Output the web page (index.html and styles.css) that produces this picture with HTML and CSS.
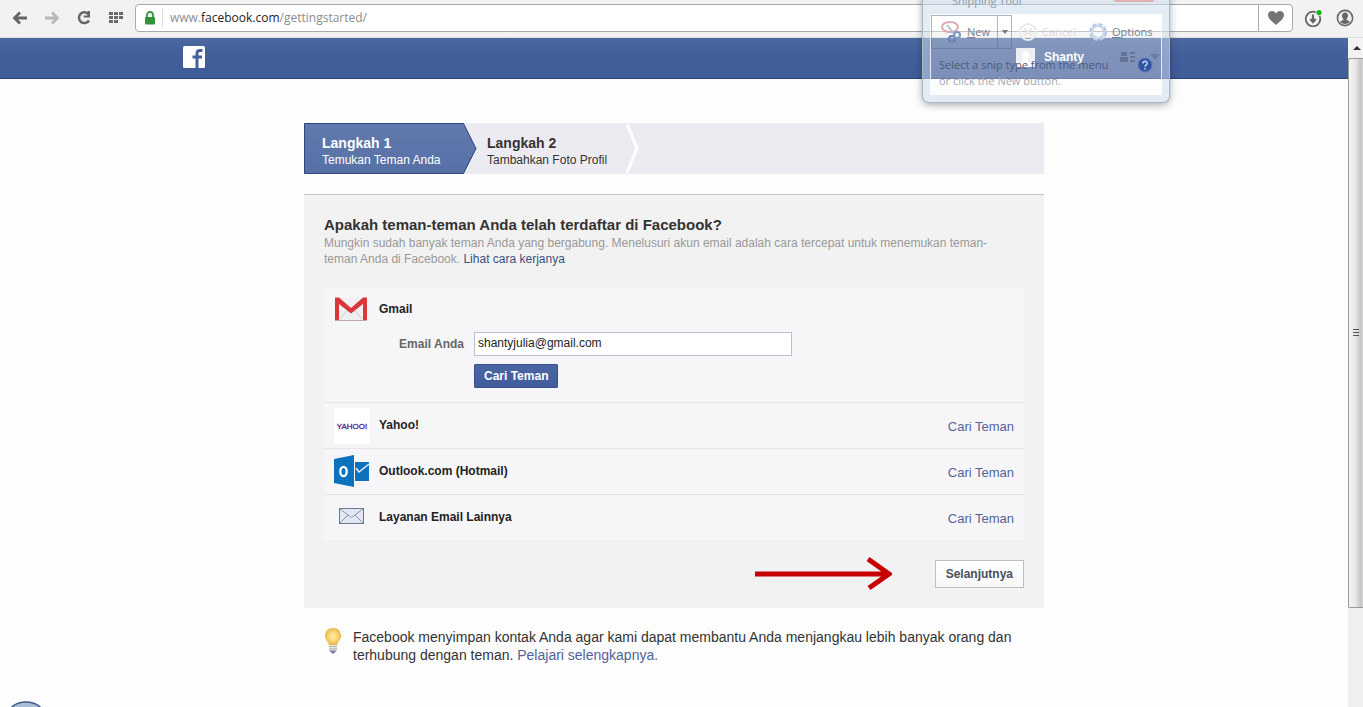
FILE: index.html
```html
<!DOCTYPE html>
<html lang="id">
<head>
<meta charset="utf-8">
<title>Facebook</title>
<link rel="stylesheet" href="styles.css">
</head>
<body>
<div class="toolbar">
  <button class="tool" aria-label="Back"><svg width="16" height="14" viewBox="0 0 16 14"><path d="M15 7H3M8 1.500L2.500 7L8 12.500" fill="none" stroke="#666" stroke-width="2.800"/></svg></button>
  <button class="tool" aria-label="Forward"><svg width="16" height="14" viewBox="0 0 16 14"><path d="M1 7H13M8 1.500L13.500 7L8 12.500" fill="none" stroke="#b8b8b8" stroke-width="2.800"/></svg></button>
  <button class="tool" aria-label="Reload"><svg width="16" height="16" viewBox="0 0 16 16"><path d="M12.500 4.200A5.400 5.400 0 1 0 13 10.500" fill="none" stroke="#666" stroke-width="2.500"/><path d="M14 1V7.500H7.800V5.500H11.500V1Z" fill="#666"/></svg></button>
  <button class="tool" aria-label="Speed dial"><svg width="16" height="12" viewBox="0 0 16 12"><path d="M1 0h4v3H1zM6 0h4v3H6zM11 0h4v3h-4zM1 4h4v3H1zM6 4h4v3H6zM11 4h4v3h-4zM1 8h4v3H1zM6 8h4v3H6z" fill="#6b6b6b"/></svg></button>
  <div class="address">
    <svg width="12" height="14" viewBox="0 0 12 14"><path d="M3 7V4a3 3 0 0 1 6 0V7" fill="none" stroke="#3a9440" stroke-width="1.800"/><rect x="1" y="6" width="10" height="7.500" rx="1" fill="#33923a"/></svg>
    <span class="url">www.<b>facebook.com</b>/gettingstarted/</span>
    <button class="heart" aria-label="Bookmark"><svg width="18" height="16" viewBox="0 0 18 16"><path d="M9 15C6 12 1 9 1 5C1 .5 7-.5 9 3.500C11-.5 17 .5 17 5C17 9 12 12 9 15Z" fill="#747474"/></svg></button>
  </div>
  <button class="tool" aria-label="Downloads"><svg width="19" height="18" viewBox="0 0 19 18"><circle cx="9" cy="10" r="7.300" fill="none" stroke="#666" stroke-width="1.800"/><path d="M9 5.500V12M6.300 10L9 13L11.700 10" fill="none" stroke="#666" stroke-width="2.200"/><circle cx="15" cy="3.500" r="3.300" fill="#f2f2f2"/><circle cx="15" cy="3.500" r="2.600" fill="#12b51c"/></svg></button>
  <button class="tool" aria-label="Account"><svg width="18" height="18" viewBox="0 0 18 18"><circle cx="9" cy="9" r="7.600" fill="none" stroke="#666" stroke-width="1.600"/><path d="M9 3.500c2 0 3 1.300 3 3.200c0 1.600-.8 2.500-1.400 3.300v1l3.400 1.400c-1 1.500-3 2.500-5 2.500s-4-1-5-2.500L7.400 11v-1C6.800 9.200 6 8.300 6 6.700c0-1.900 1-3.200 3-3.200Z" fill="#666"/></svg></button>
</div>

<div class="viewport">
  <div class="page">
    <header class="bluebar">
      <div class="bar-inner">
        <a href="#" class="logo" aria-label="Facebook"><svg width="22" height="22" viewBox="0 0 22 22"><rect width="22" height="22" rx="1.500" fill="#fff"/><path d="M14 22V7.500Q14 4.600 17 4.600H19.500M9.500 11H19" fill="none" stroke="#45619d" stroke-width="3"/></svg></a>
        <a href="#" class="user"><svg width="19" height="19" viewBox="0 0 19 19"><rect width="19" height="19" fill="#e4e7ee"/><path d="M9.500 3C12 3 13.500 4.700 13.200 7.500C13 9.800 12 11 11.800 12C12 14 16 14 16 19H3C3 14 7 14 7.200 12C7 11 6 9.800 5.800 7.500C5.500 4.700 7 3 9.500 3Z" fill="#fff"/></svg>Shanty</a>
        <a href="#" class="menu-icon" aria-label="Menu"><svg width="15" height="12" viewBox="0 0 15 12"><path d="M1 1h6v4H1zM0 6h8v5H0zM10 1h5v2h-5zM10 5h5v2h-5zM10 9h5v2h-5z" fill="#1f3263"/></svg></a>
        <a href="#" class="caret" aria-label="Account settings"><svg width="10" height="6" viewBox="0 0 10 6"><path d="M0 0H10L5 6Z" fill="#2b3f73"/></svg></a>
      </div>
    </header>

    <main class="content">
      <ol class="steps">
        <li class="step current">
          <svg class="step-shape" width="173" height="51" viewBox="0 0 173 51" aria-hidden="true"><defs><linearGradient id="stepFill" x2="0" y2="1"><stop stop-color="#627aad"/><stop offset="1" stop-color="#5670a6"/></linearGradient></defs><path d="M.5.500H159.500L172 25.500L159.500 50.500H.500Z" fill="url(#stepFill)" stroke="#2c4687"/></svg>
          <strong>Langkah 1</strong><span>Temukan Teman Anda</span>
        </li>
        <li class="step">
          <strong>Langkah 2</strong><span>Tambahkan Foto Profil</span>
        </li>
        <li class="chevron" aria-hidden="true"><svg width="14" height="49" viewBox="0 0 14 49"><path d="M1 0L11 24.500L1 49" fill="none" stroke="#fff" stroke-width="3"/></svg></li>
      </ol>

      <section class="panel">
        <h1>Apakah teman-teman Anda telah terdaftar di Facebook?</h1>
        <p class="intro">Mungkin sudah banyak teman Anda yang bergabung. Menelusuri akun email adalah cara tercepat untuk menemukan teman-teman Anda di Facebook. <a href="#">Lihat cara kerjanya</a></p>

        <div class="providers">
          <form class="provider gmail">
            <svg class="icon" width="36" height="36" viewBox="0 0 36 36"><rect x="2" y="7" width="30" height="22" fill="#f1efef"/><path d="M6 28L14 19M28 28L20 19" stroke="#d0cccc" fill="none"/><path d="M1 29.500H33" stroke="#b9a9a9"/><path d="M1 29V6.500H5L17 17L29 6.500H33V29H29V13L17 22.500L5 13V29Z" fill="#d9373c"/></svg>
            <strong class="name">Gmail</strong>
            <label for="email">Email Anda</label>
            <input id="email" type="text" value="shantyjulia@gmail.com">
            <button class="primary" type="button">Cari Teman</button>
          </form>
          <div class="provider">
            <svg class="icon" width="36" height="36" viewBox="0 0 36 36"><rect width="36" height="36" fill="#fff"/><text class="yahoo-mark" x="18" y="21" text-anchor="middle">YAHOO!</text></svg>
            <strong class="name">Yahoo!</strong><a href="#">Cari Teman</a>
          </div>
          <div class="provider">
            <svg class="icon" width="36" height="36" viewBox="0 0 36 36"><path d="M21 8H35V27H21Z" fill="#0d72bd"/><path d="M22 14L25 18L35 10" fill="none" stroke="#e8f3fb" stroke-width="1.500"/><path d="M0 5L20 1V33L0 29Z" fill="#0d72bd"/><path d="M20.500 3V31" stroke="#f6f6f8"/><ellipse cx="9.500" cy="17.500" rx="3.200" ry="4.700" fill="none" stroke="#fff" stroke-width="2.300"/></svg>
            <strong class="name">Outlook.com (Hotmail)</strong><a href="#">Cari Teman</a>
          </div>
          <div class="provider">
            <svg class="icon" width="36" height="36" viewBox="0 0 36 36"><rect x="5.500" y="8.500" width="24" height="15" fill="#e3e6f5" stroke="#6b7695"/><path d="M6 9L17.500 17.500L29 9M6 23L14 15M29 23L21 15" fill="none" stroke="#8b95b5"/></svg>
            <strong class="name">Layanan Email Lainnya</strong><a href="#">Cari Teman</a>
          </div>
        </div>

        <div class="actions">
          <svg width="138" height="36" viewBox="0 0 138 36" aria-hidden="true"><path d="M1 18H134M114 3L135 18L115 32" fill="none" stroke="#c80000" stroke-width="5"/></svg>
          <button class="next" type="button">Selanjutnya</button>
        </div>
      </section>

      <div class="tip">
        <svg width="18" height="28" viewBox="0 0 18 28"><defs><radialGradient id="glow"><stop stop-color="#fff0a8"/><stop offset=".5" stop-color="#fbd978"/><stop offset="1" stop-color="#e9b64c"/></radialGradient></defs><path d="M9 0C14 0 17 3.500 17 8C17 12 13.500 13.500 13 17H5C4.500 13.500 1 12 1 8C1 3.500 4 0 9 0Z" fill="url(#glow)"/><path d="M5 18.500H13M5 21H13" stroke="#b9b5a4" stroke-width="1.500"/><path d="M5 22.500H13L9 26Z" fill="#7478a0"/></svg>
        <p>Facebook menyimpan kontak Anda agar kami dapat membantu Anda menjangkau lebih banyak orang dan terhubung dengan teman. <a href="#">Pelajari selengkapnya.</a></p>
      </div>
    </main>
  </div>

  <div class="scrollbar" aria-hidden="true">
    <svg class="arrow-up" width="15" height="20" viewBox="0 0 15 20"><path d="M5 12L9 8L13 12Z" fill="#333"/></svg>
    <div class="thumb"><svg width="6" height="8" viewBox="0 0 6 8"><path d="M0 .5H6M0 3.500H6M0 6.500H6" stroke="#555"/></svg></div>
  </div>
</div>

<div class="snip">
  <div class="snip-title">Snipping Tool</div>
  <div class="snip-close"></div>
  <div class="snip-body">
    <div class="snip-tools">
      <button class="snip-new"><svg width="22" height="24" viewBox="0 0 22 24"><ellipse cx="9" cy="7" rx="8" ry="5" fill="none" stroke="#dba9b2" stroke-width="2"/><path d="M6 5L14 15" stroke="#b8bccb" stroke-width="2"/><circle cx="11" cy="19" r="3" fill="none" stroke="#6581b5" stroke-width="2"/><circle cx="16" cy="15" r="3" fill="none" stroke="#7f98c4" stroke-width="2"/></svg><span><u>N</u>ew</span></button>
      <button class="snip-drop" aria-label="Snip types"><svg width="6" height="4" viewBox="0 0 6 4"><path d="M0 0H6L3 4Z" fill="#777"/></svg></button>
      <button class="snip-cancel"><svg width="20" height="20" viewBox="0 0 20 20"><circle cx="10" cy="10" r="8" fill="none" stroke="#e9ebef" stroke-width="2"/><path d="M6 6L14 14M14 6L6 14" stroke="#f0e4e6" stroke-width="2"/></svg><span>Cancel</span></button>
      <button class="snip-options"><svg width="20" height="20" viewBox="0 0 20 20"><circle cx="10" cy="10" r="7" fill="none" stroke="#b9cae6" stroke-width="4" stroke-dasharray="4 1.500"/><circle cx="10" cy="10" r="6" fill="none" stroke="#cbd8ec" stroke-width="2"/></svg><span><u>O</u>ptions</span></button>
    </div>
    <p class="snip-help">Select a snip type from the menu<br><span>or click the New button.</span></p>
    <svg class="snip-question" width="16" height="16" viewBox="0 0 16 16"><circle cx="8" cy="8" r="7" fill="#3155a3" stroke="#5f7cb8"/><path d="M5.800 6.500C5.800 3.500 10.500 3.800 10.200 6.500C10 8 8 8 8 9.800M8 11V12.500" fill="none" stroke="#c9d6ee" stroke-width="1.500"/></svg>
  </div>
</div>

<svg class="orb" width="32" height="6" viewBox="0 0 32 6" aria-hidden="true"><ellipse cx="16" cy="14" rx="18" ry="13" fill="#a9bdd8" stroke="#3e5c85" stroke-width="1.500"/></svg>
</body>
</html>
```
FILE: styles.css
```css
* { box-sizing: border-box; }

body {
  margin: 0;
  min-height: 100vh;
  display: flex;
  flex-direction: column;
  position: relative;
  overflow: hidden;
  background: #fdfdfe;
  color: #333;
  font: 12px/16px "Liberation Sans", Arial, sans-serif;
}

button { font: inherit; color: inherit; margin: 0; padding: 0; border: 0; background: none; }
a { color: #52639b; text-decoration: none; }
svg { display: block; flex: none; }

/* Browser toolbar */
.toolbar {
  display: flex;
  align-items: center;
  height: 38px;
  padding: 0 2px 2px 4px;
  background: #f2f2f2;
  border-bottom: 1px solid #dcdcdc;
}
.tool { flex: none; width: 32px; height: 28px; display: flex; align-items: center; justify-content: center; }
.address {
  flex: 1;
  display: flex;
  align-items: center;
  height: 28px;
  margin: 0 4px 0 3px;
  padding-left: 8px;
  background: #fff;
  border: 1px solid #aaa;
  border-radius: 4px;
}
.url {
  flex: 1;
  margin-left: 6px;
  padding-left: 7px;
  border-left: 1px solid #ddd;
  color: #8c8c8c;
  font: 12px/20px "Open Sans", "Noto Sans", sans-serif;
}
.url b { font-weight: 400; color: #222; }
.heart { width: 34px; height: 26px; display: flex; align-items: center; justify-content: center; border-left: 1px solid #aaa; }

/* Page area and scrollbar */
.viewport { flex: 1; display: flex; }
.page { flex: 1; }
.scrollbar { flex: none; width: 15px; background: #efefef; display: flex; flex-direction: column; }
.arrow-up { background: #f3f3f3; }
.thumb {
  height: 550px;
  display: flex;
  align-items: center;
  justify-content: center;
  border: 1px solid #999;
  border-right: 0;
  border-radius: 2px 0 0 2px;
  background: linear-gradient(90deg, #f5f5f5, #e6e6e6 50%, #c6c6c6 80%, #d4d4d4);
}

/* Blue bar */
.bluebar {
  height: 41px;
  background: linear-gradient(#4c699f, #43609c 35%, #3f5b98);
  border-bottom: 1px solid #2c427c;
}
.bar-inner { width: 982px; max-width: 100%; height: 38px; margin: 0 auto; display: flex; align-items: center; }
.user { margin-left: auto; display: flex; align-items: center; gap: 9px; color: #fff; font-weight: 700; }
.menu-icon { margin: 0 15px 0 36px; }
.caret { margin-right: 5px; }

.content { width: 740px; max-width: 100%; margin: 44px auto 0; }

/* Steps */
.steps {
  list-style: none;
  margin: 0;
  padding: 0;
  display: flex;
  height: 51px;
  background: #ecebf2;
}
.step { position: relative; padding: 12px 0 0 18px; width: 165px; }
.step strong, .step span { position: relative; display: block; }
.step strong { font-size: 14px; }
.step span { line-height: 18px; }
.step-shape { position: absolute; top: 0; left: 0; }
.current { color: #fff; }
.chevron { margin-left: -8px; padding-top: 1px; }

/* Friend finder */
.panel {
  margin-top: 20px;
  padding: 20px;
  background: #f2f2f2;
  border-top: 1px solid #c4c4c4;
}
h1 { margin: 0; font-size: 15px; line-height: 20px; }
.intro { margin: 0; padding-right: 16px; color: #999; }
.intro a { color: #3b5081; }
.providers { margin-top: 22px; background: #f6f6f8; }
.provider {
  height: 46px;
  padding: 0 10px;
  display: flex;
  align-items: center;
  border-top: 1px solid #e6e6e8;
}
.provider .icon { margin-right: 9px; }
.provider a { margin-left: auto; font-size: 13px; padding-top: 2px; }
.name { color: #222; padding-bottom: 2px; }
.yahoo-mark { font: 8px "Liberation Sans", Arial, sans-serif; fill: #51258c; stroke: #51258c; stroke-width: .3px; }
.gmail {
  height: 113px;
  border-top: 0;
  display: grid;
  grid-template-columns: 36px 86px 318px;
  grid-template-rows: 36px 26px 30px;
  gap: 4px 9px;
  padding-top: 2px;
  align-content: start;
}
.gmail .icon { margin: 0; }
.gmail .name { grid-column: 2 / -1; padding: 0; }
.gmail label { grid-column: 1 / 3; justify-self: end; padding-right: 1px; color: #666; font-weight: 700; }
.gmail input {
  width: 100%;
  height: 24px;
  margin: 0;
  padding: 0 3px 2px;
  border: 1px solid #bdc0cc;
  background: #fff;
  color: #222;
  font: inherit;
}
.primary {
  grid-column: 3;
  justify-self: start;
  height: 24px;
  padding: 0 9px;
  border: 1px solid #365090;
  border-radius: 1px;
  background: linear-gradient(#4a66a5, #405c9b);
  color: #fff;
  font-weight: 700;
}

.actions { display: flex; align-items: center; justify-content: flex-end; gap: 43px; margin-top: 16px; height: 32px; padding-top: 3px; }
.next {
  height: 28px;
  padding: 0 10px;
  border: 1px solid #bfbfbf;
  background: linear-gradient(#fff, #f8f8f8);
  color: #4a4f58;
  font-weight: 700;
}

.tip { display: flex; gap: 11px; padding: 20px 10px 0 20px; }
.tip p { margin: 0; font-size: 14px; line-height: 18px; }

/* Translucent floating window */
.snip {
  position: absolute;
  top: -12px;
  right: 194px;
  width: 246px;
  height: 114px;
  border: solid rgba(205, 222, 238, .55);
  border-width: 26px 7px 7px;
  border-radius: 6px;
  box-shadow: 0 0 0 1px #a9b8c8, 0 2px 9px rgba(0, 0, 0, .4);
  color: #777f90;
  font: 11px/16px "Open Sans", "Noto Sans", sans-serif;
}
.snip-title { position: absolute; top: -21px; left: 22px; color: #8d99a8; }
.snip-close { position: absolute; top: -26px; right: 7px; width: 42px; height: 14px; background: rgba(224, 130, 130, .55); border-radius: 0 0 4px 4px; }
.snip-body { position: relative; height: 100%; background: rgba(255, 255, 255, .32); border: 1px solid rgba(255, 255, 255, .8); }
.snip-tools { display: flex; height: 34px; }
.snip-tools button { display: flex; align-items: center; gap: 4px; }
.snip-tools .snip-new { width: 67px; padding-left: 9px; border: 1px solid rgba(90, 105, 140, .5); }
.snip-tools .snip-drop { width: 14px; justify-content: center; border: 1px solid rgba(90, 105, 140, .5); border-left: 0; }
.snip-tools .snip-cancel { width: 76px; padding-left: 6px; color: #e2d8da; }
.snip-help { margin: 8px 0 0 8px; color: #4d5a7e; }
.snip-help span { color: #a3a8b4; }
.snip-question { position: absolute; right: 8px; top: 42px; }

.orb { position: absolute; left: 10px; bottom: 0; }
```
